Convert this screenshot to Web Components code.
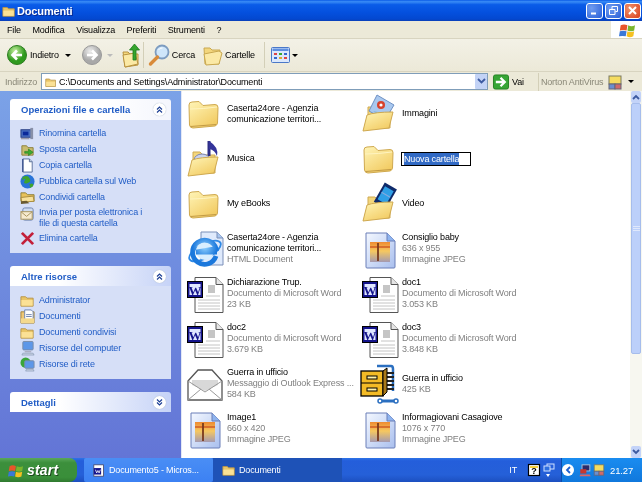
<!DOCTYPE html>
<html lang="it"><head><meta charset="utf-8"><title>Documenti</title>
<style>
html,body{margin:0;padding:0;width:642px;height:482px;overflow:hidden;background:#ece9d8;font-family:"Liberation Sans",Arial,sans-serif;font-size:9px}
</style></head>
<body>
<xp-window>
  <xp-titlebar slot="title" label="Documenti"></xp-titlebar>
  <xp-menubar slot="menu"></xp-menubar>
  <xp-toolbar slot="tools"></xp-toolbar>
  <xp-address slot="address" path="C:\Documents and Settings\Administrator\Documenti"></xp-address>
  <xp-sidebar slot="side">
    <xp-panel label="Operazioni file e cartella" first>
      <xp-task icon="rename">Rinomina cartella</xp-task>
      <xp-task icon="move">Sposta cartella</xp-task>
      <xp-task icon="copy">Copia cartella</xp-task>
      <xp-task icon="globe">Pubblica cartella sul Web</xp-task>
      <xp-task icon="share">Condividi cartella</xp-task>
      <xp-task icon="mail" multi>Invia per posta elettronica i<br>file di questa cartella</xp-task>
      <xp-task icon="del">Elimina cartella</xp-task>
    </xp-panel>
    <xp-panel label="Altre risorse">
      <xp-task icon="folder">Administrator</xp-task>
      <xp-task icon="mydocs">Documenti</xp-task>
      <xp-task icon="folder">Documenti condivisi</xp-task>
      <xp-task icon="pc">Risorse del computer</xp-task>
      <xp-task icon="net">Risorse di rete</xp-task>
    </xp-panel>
    <xp-panel label="Dettagli" collapsed></xp-panel>
  </xp-sidebar>
  <xp-files slot="main">
    <xp-file icon="folder" name="Caserta24ore - Agenzia" name2="comunicazione territori..."></xp-file>
    <xp-file icon="fpics" name="Immagini"></xp-file>
    <xp-file icon="fmusic" name="Musica"></xp-file>
    <xp-file icon="folder" name="Nuova cartella" editing></xp-file>
    <xp-file icon="folder" name="My eBooks"></xp-file>
    <xp-file icon="fvideo" name="Video"></xp-file>
    <xp-file icon="ie" name="Caserta24ore - Agenzia" name2="comunicazione territori..." d1="HTML Document"></xp-file>
    <xp-file icon="jpg" name="Consiglio baby" d1="636 x 955" d2="Immagine JPEG"></xp-file>
    <xp-file icon="word" name="Dichiarazione Trup." d1="Documento di Microsoft Word" d2="23 KB"></xp-file>
    <xp-file icon="word" name="doc1" d1="Documento di Microsoft Word" d2="3.053 KB"></xp-file>
    <xp-file icon="word" name="doc2" d1="Documento di Microsoft Word" d2="3.679 KB"></xp-file>
    <xp-file icon="word" name="doc3" d1="Documento di Microsoft Word" d2="3.848 KB"></xp-file>
    <xp-file icon="eml" name="Guerra in ufficio" d1="Messaggio di Outlook Express ..." d2="584 KB"></xp-file>
    <xp-file icon="zip" name="Guerra in ufficio" d1="425 KB"></xp-file>
    <xp-file icon="jpg" name="Image1" d1="660 x 420" d2="Immagine JPEG"></xp-file>
    <xp-file icon="jpg" name="Informagiovani Casagiove" d1="1076 x 770" d2="Immagine JPEG"></xp-file>
    <xp-file icon="blank"></xp-file>
    <xp-file icon="blank"></xp-file>
  </xp-files>
  <xp-scrollbar slot="scroll"></xp-scrollbar>
  <xp-taskbar slot="taskbar"></xp-taskbar>
</xp-window>
<script>
const FONT='"Liberation Sans",Arial,sans-serif';
const FOLDER=`<defs><linearGradient id="f" x1="0" y1="0" x2=".7" y2="1"><stop offset="0" stop-color="#fff5b8"/><stop offset="1" stop-color="#f2cb62"/></linearGradient></defs>`;
const ICONS={
folder:FOLDER+`<path d="M2 7Q2 4 5 4L12 3.500L16 7.500L28 6.500Q31 6.500 31 9.500L30.500 25Q30 27.500 28 28L6 30Q3 30 2.500 27Z" fill="url(#f)" stroke="#cfa950" stroke-width="1"/><path d="M3 11Q16 11 30 9" fill="none" stroke="#fff4c0" stroke-width="1"/><path d="M3.500 28.500L29 26.500" stroke="#c29a45" stroke-width="1.200"/>`,
openback:`<path d="M6 9h7l3 3h12v18H6z" fill="#f3d67c" stroke="#cfa950"/>`,
blank:`<path d="M6 .5h18l5 5V32H6z" fill="#fff" stroke="#8a8a8a"/><path d="M24 .5v5h5" fill="#ddd" stroke="#8a8a8a"/>`,
word:`<path d="M8 -.5h21l7 7V34.500H8z" fill="#fff" stroke="#555"/><path d="M29 -.5v7h7" fill="#e6e6e6" stroke="#555"/><path d="M21 7h7v8h-7z" fill="#c5c5c5"/><path d="M19 18h14M11 22h22M11 25h22M11 28h22M11 31h22" stroke="#c4c4c4"/><rect x="0.500" y="3.500" width="15" height="16" fill="#14148c" stroke="#000"/><rect x="2.500" y="6" width="11" height="11" fill="#dfe6ff"/><text x="8" y="16.500" font-family="Liberation Serif,serif" font-weight="bold" font-size="13" text-anchor="middle" fill="#14148c">W</text>`,
jpg:`<defs><linearGradient id="p" x1="0" y1="0" x2="1" y2="1"><stop offset="0" stop-color="#f4f8ff"/><stop offset="1" stop-color="#a9bfee"/></linearGradient><linearGradient id="s" x1="0" y1="0" x2="0" y2="1"><stop offset="0" stop-color="#ee8a30"/><stop offset=".45" stop-color="#f6c860"/><stop offset="1" stop-color="#a59ab0"/></linearGradient></defs><path d="M4 0h21l8 8v26q0 1-1 1H5q-1 0-1-1z" fill="url(#p)" stroke="#6a7fb8"/><path d="M25 0v8h8" fill="#8fb4ee" stroke="#6a7fb8"/><rect x="8" y="9" width="20" height="20" fill="url(#s)"/><path d="M8 14h20" stroke="#c8481c" stroke-width="1.200"/><path d="M16 10v18" stroke="#7a3a1c" stroke-width="1.800"/>`,
ie:`<defs><radialGradient id="e" cx=".5" cy=".3"><stop offset="0" stop-color="#8fd0ff"/><stop offset="1" stop-color="#1b78dc"/></radialGradient></defs><path d="M14 -1h16l6 6v27H14z" fill="#dfeafc" stroke="#7b8fb8"/><path d="M30 -1v6h6" fill="#a9c6ee" stroke="#7b8fb8"/><ellipse cx="18" cy="18" rx="17.500" ry="7" transform="rotate(-28 18 18)" fill="none" stroke="#2f8ae6" stroke-width="1.800"/><circle cx="18" cy="18" r="9" fill="#d8eeff"/><path d="M29 23A12 12 0 1 1 29 15.500L9 19H30" fill="none" stroke="url(#e)" stroke-width="4.800"/>`,
eml:`<path d="M1 13L11 2H25L35 13V32H1Z" fill="#fff" stroke="#555" stroke-width="1.300"/><path d="M5 12H31V17L18 23L5 17Z" fill="#d8d8d8"/><path d="M1 13L18 24L35 13M1 32L14 21M35 32L22 21" fill="none" stroke="#999"/>`,
zip:`<g transform="translate(-2,-3)"><path d="M17 1H31Q33 1 33 4V26" fill="none" stroke="#2b6fc0" stroke-width="2.500"/><path d="M25 8h9M25 12h9M25 16h9M25 20h9M25 24h9" stroke="#222" stroke-width="1.800"/><rect x="1" y="6" width="22" height="25" fill="#f3bb26" stroke="#000" stroke-width="1.300"/><path d="M23 6L27 3V27L23 31Z" fill="#a8791a" stroke="#000"/><path d="M1 18H23" stroke="#000"/><rect x="7" y="11" width="10" height="3" fill="#fff3a8" stroke="#000"/><rect x="7" y="23" width="10" height="3" fill="#fff3a8" stroke="#000"/><circle cx="20" cy="36" r="2" fill="none" stroke="#2b6fc0" stroke-width="1.500"/><circle cx="36" cy="36" r="2" fill="none" stroke="#2b6fc0" stroke-width="1.500"/><path d="M22 36H34" stroke="#2b6fc0" stroke-width="3"/></g>`,
back:`<defs><radialGradient id="g" cx=".4" cy=".3"><stop offset="0" stop-color="#c8f0a0"/><stop offset="1" stop-color="#2f9a1e"/></radialGradient></defs><circle cx="10" cy="10" r="9.500" fill="url(#g)" stroke="#2d7d20"/><path d="M15 10H6M10 5.500L5.500 10L10 14.500" fill="none" stroke="#fff" stroke-width="2.600"/>`,
fwd:`<defs><radialGradient id="g" cx=".4" cy=".3"><stop offset="0" stop-color="#eee"/><stop offset="1" stop-color="#a8a8a8"/></radialGradient></defs><circle cx="10" cy="10" r="9.500" fill="url(#g)" stroke="#999"/><path d="M5 10H14M10 5.500L14.500 10L10 14.500" fill="none" stroke="#fff" stroke-width="2.600"/>`,
up:`<path d="M2 9h5l2 2h8v11L4 24Z" fill="#f7da7e" stroke="#b8923e"/><path d="M2 12L14 10L17 21L4 24Z" fill="#fbe9a5" stroke="#b8923e"/><path d="M12 17V7H8.500L13.500 1L18.500 7H15V17Z" fill="#35a52c" stroke="#1d7a1c" stroke-width=".8"/>`,
search:`<circle cx="13" cy="8" r="6.500" fill="#cfe6fa" stroke="#7d9cc0" stroke-width="1.800"/><path d="M9.500 6a4 4 0 0 1 4-2" stroke="#fff" fill="none"/><path d="M8.500 13L1.500 20" stroke="#d98b3a" stroke-width="3.400" stroke-linecap="round"/>`,
tfolder:`<path d="M1 3h6l2 2h8l-1 14H2Z" fill="#f3d67c" stroke="#c9a850"/><path d="M1 9L16 6L19 8L16 19L3 20Z" fill="#fbe9a5" stroke="#c9a850"/>`,
views:`<rect x=".5" y=".5" width="18" height="15" rx="1" fill="#dbe8fc" stroke="#4a78c8"/><rect x="1.500" y="1.500" width="16" height="2.500" fill="#5f8fe0"/><path d="M3 6h3v2H3z" fill="#d44"/><path d="M8 6h3v2H8z" fill="#3a3"/><path d="M13 6h3v2h-3z" fill="#36c"/><path d="M3 10h3v2H3z" fill="#36c"/><path d="M8 10h3v2H8z" fill="#da3"/><path d="M13 10h3v2h-3z" fill="#d44"/>`,
flag:`<path d="M2 4Q6 2 10 4L9 10Q5 9 1 10Z" fill="#e8552a"/><path d="M11 4Q15 6 19 4L18 10Q14 12 10 10Z" fill="#7ab52c"/><path d="M1 11Q5 10 9 11L8 17Q4 16 0 17Z" fill="#3a78d8"/><path d="M10 11Q14 13 18 11L17 17Q13 19 9 17Z" fill="#f5c020"/>`,
go:`<rect x=".5" y=".5" width="16" height="15" rx="2" fill="#37a535" stroke="#20801f"/><path d="M3 8H12M8 3.500L12.500 8L8 12.500" fill="none" stroke="#fff" stroke-width="2.400"/>`,
norton:`<rect x="1" y="1" width="12" height="8" fill="#f5dc60" stroke="#7a7a60"/><rect x="1" y="9" width="6" height="5" fill="#6a8fd0" stroke="#667"/><rect x="7" y="9" width="6" height="5" fill="#d06a6a" stroke="#667"/>`,
rename:`<rect x="1" y="4" width="11" height="8" fill="#4a6fc0" stroke="#223a80"/><rect x="3" y="6" width="6" height="4" fill="#0b2a9a"/><path d="M12.500 2v12" stroke="#8890a8" stroke-width="3"/><path d="M1 13.500h9" stroke="#99a" stroke-width="1.400"/>`,
move:`<path d="M2 4h5l1.500 2H14v8H2Z" fill="#c9bc70" stroke="#8d7f3a"/><path d="M5 10h4V7.500L14 11l-5 3.500V12H5Z" fill="#3dab2e" stroke="#1e7a1c" stroke-width=".6"/>`,
copy:`<path d="M3 1h7l3 3v11H3Z" fill="#fff" stroke="#5a6f9a"/><path d="M10 1v3h3" fill="#bcd" stroke="#5a6f9a"/><path d="M3 1v14" stroke="#3d5590" stroke-width="1.500"/>`,
globe:`<circle cx="8" cy="8" r="7.500" fill="#2a74d8"/><path d="M3 3Q7 1 9 3T11 7T7 10T5 7T2 7ZM10 11Q13 9 14 11T11 15Z" fill="#3fa52e"/>`,
share:`<path d="M1 3h5l2 2h7v7H1Z" fill="#e8c25a" stroke="#8d7f3a"/><path d="M1 8L14 6.500L15 12L2 13Z" fill="#f8e199" stroke="#a88a3a"/><path d="M1 12L7 11.500L10 14L1 15Z" fill="#6a5a30"/>`,
mail:`<rect x="3" y="1" width="11" height="13" rx="2" fill="#cfdcf2" stroke="#6c82ae"/><rect x="1" y="5" width="12" height="8" fill="#f6ead0" stroke="#a8925a"/><path d="M1 5L7 10L13 5" fill="none" stroke="#a8925a"/>`,
del:`<path d="M2 2L14 14M14 2L2 14" stroke="#c3203a" stroke-width="3"/>`,
tfold:`<path d="M1 4h5l1.500 1.500H14V14H1Z" fill="#e9c566" stroke="#b89448"/><path d="M1.500 7.500H13.500V13.500H1.500Z" fill="#fbe195"/>`,
mydocs:`<path d="M1 3h14v12H1Z" fill="#eec877" stroke="#a58438"/><path d="M5 1h7l2 2v9H5Z" fill="#fff" stroke="#6c82ae"/><path d="M6.500 6h6M6.500 8h6" stroke="#6c82ae"/><path d="M1 10H15V15H1Z" fill="#f4d98d"/>`,
pc:`<rect x="3" y="0.500" width="11" height="9" rx="1" fill="#5d97e8" stroke="#7a8ca8"/><path d="M5 11h7v1H5z" fill="#99a"/><path d="M3 13h11l1 2H2Z" fill="#c9d3e5" stroke="#7a8ca8" stroke-width=".6"/>`,
net:`<circle cx="6" cy="6" r="5.500" fill="#3aa63a"/><rect x="5" y="4" width="10" height="8" rx="1" fill="#5d97e8" stroke="#7a8ca8"/><path d="M7 13h7l1 2H6Z" fill="#c9d3e5" stroke="#7a8ca8" stroke-width=".6"/>`,
docw:`<rect x="1" y="1" width="12" height="14" fill="#fff" stroke="#446"/><rect x="1" y="5" width="9" height="8" fill="#14148c"/><path d="M3 7l1.500 4L6 8l1.500 3L9 7" fill="none" stroke="#fff"/>`,
help:`<rect x=".5" y=".5" width="11" height="11" fill="#fff" stroke="#000" stroke-width="1.200"/><path d="M2 2h8v2H2z" fill="#f5d040"/><text x="6" y="10" font-family="Liberation Sans,sans-serif" font-weight="bold" font-size="9" text-anchor="middle" fill="#000">?</text>`,
tnet:`<rect x="4" y="1" width="7" height="5" fill="none" stroke="#cfe0ff"/><rect x="1" y="3" width="6" height="5" fill="#2e6fe0" stroke="#cfe0ff"/><path d="M3 11h4l-2 3z" fill="#fff"/>`,
tnet2:`<rect x="3" y="1" width="9" height="7" fill="#2b2b6a" stroke="#bcd"/><rect x="1" y="6" width="7" height="5" fill="#c8372f"/><path d="M1 12H12L13 14H0Z" fill="#d66"/>`
};
const openFolder=(extra)=>FOLDER+ICONS.openback+extra+`<path d="M1 33L5 17Q13 14 31 14L27 30Z" fill="url(#f)" stroke="#cfa950"/>`;
ICONS.fpics=openFolder(`<path d="M15 -3L32 7L23 22L7 13Z" fill="#a9c8ef" stroke="#6f91c4"/><circle cx="19" cy="7" r="4" fill="#d7422c"/><circle cx="19" cy="7" r="1.600" fill="#fff"/><path d="M11 13L26 16L23 22Z" fill="#7fb4e0"/>`);
ICONS.fmusic=openFolder(`<path d="M22 -2V13" stroke="#2e2e86" stroke-width="3"/><path d="M22 -2Q32 4 30 13Q28 7 22 6Z" fill="#34349a"/><ellipse cx="15" cy="17" rx="8" ry="6" fill="#c9d2ec" stroke="#7c85b3"/>`);
ICONS.fvideo=openFolder(`<g transform="rotate(30 22 8)"><rect x="16" y="-4" width="14" height="22" fill="#0f2a6a"/><rect x="18" y="-1" width="10" height="15" fill="#2f9fe6"/><path d="M18 6h10" stroke="#8ad" /></g>`);

const tpl=(css,html)=>{const t=document.createElement('template');t.innerHTML=`<style>${css}</style>${html}`;return t};
const mk=(name,css,html,setup)=>{const t=tpl(css,html);customElements.define(name,class extends HTMLElement{constructor(){super();this.attachShadow({mode:'open'}).appendChild(t.content.cloneNode(true))}connectedCallback(){setup&&setup.call(this,this.shadowRoot)}})};

customElements.define('xp-icon',class extends HTMLElement{static get observedAttributes(){return['name']}
constructor(){super();this.attachShadow({mode:'open'})}
render(){const n=this.getAttribute('name'),w=+this.getAttribute('w')||16,h=+this.getAttribute('h')||w,vb=this.getAttribute('vb')||`0 0 ${w} ${h}`;
this.shadowRoot.innerHTML=`<style>:host{display:block;flex:none;width:${w}px;height:${h}px}svg{display:block;overflow:visible}</style><svg width="${w}" height="${h}" viewBox="${vb}">${ICONS[n]||''}</svg>`}
connectedCallback(){this.render()}attributeChangedCallback(){this.render()}});

mk('xp-window',`:host{display:grid;width:642px;height:482px;grid-template:21px 18px 33px 19px 367px 24px/181px 449px 12px;overflow:hidden;filter:blur(.25px);letter-spacing:-.15px}
::slotted([slot=title]),::slotted([slot=menu]),::slotted([slot=tools]),::slotted([slot=address]),::slotted([slot=taskbar]){grid-column:1/-1}`,
`<slot name="title"></slot><slot name="menu"></slot><slot name="tools"></slot><slot name="address"></slot><slot name="side"></slot><slot name="main"></slot><slot name="scroll"></slot><slot name="taskbar"></slot>`);

mk('xp-titlebar',`:host{display:flex;align-items:center;background:linear-gradient(#0a5ae6 0,#3a8cf6 8%,#0a5ce8 22%,#0450de 60%,#0348d0 90%,#0a3fb8 100%);color:#fff;font:bold 11px ${FONT};letter-spacing:-.15px;padding:0 1px 0 2px;gap:1px;text-shadow:1px 1px #0a2a90}
.t{flex:1}.b{width:17px;height:16px;border:1px solid #fff;border-radius:3px;box-sizing:border-box;background:radial-gradient(circle at 30% 30%,#6f9cf0,#2a5fd8);margin-left:1px;display:flex;align-items:center;justify-content:center}.c{background:radial-gradient(circle at 30% 30%,#f0906a,#d8401c)}svg{display:block}`,
`<xp-icon name="tfold" w="14" vb="0 0 16 16"></xp-icon><span class="t"></span><span class="b"><svg width="11" height="11"><path d="M2 8.500h5" stroke="#fff" stroke-width="2"/></svg></span><span class="b"><svg width="11" height="11"><path d="M1.500 4.500h5.500v5H1.500zM4 4V1.500h5.500v5H7.500" fill="none" stroke="#fff"/></svg></span><span class="b c"><svg width="11" height="11"><path d="M2 2l7 7M9 2l-7 7" stroke="#fff" stroke-width="2"/></svg></span>`,
function(s){s.querySelector('.t').textContent=this.getAttribute('label')});

mk('xp-menubar',`:host{display:flex;align-items:center;background:#ece9d8;border-bottom:1px solid #d8d4c0;box-sizing:border-box;font:9px ${FONT};color:#000;padding-left:7px}
ul{display:flex;flex:1;margin:0;padding:0;list-style:none}li{margin-right:11.500px}.logo{width:31px;height:17px;background:#fff;display:flex;align-items:center;justify-content:center}`,
`<ul><li>File</li><li>Modifica</li><li>Visualizza</li><li>Preferiti</li><li>Strumenti</li><li>?</li></ul><div class="logo"><xp-icon name="flag" w="16" h="16" vb="0 0 19 19"></xp-icon></div>`);

mk('xp-toolbar',`:host{display:flex;align-items:center;background:linear-gradient(#f3f1e6,#ece9d8);border-bottom:1px solid #d8d4c0;box-sizing:border-box;font:9px ${FONT};color:#000;padding-left:7px}
.t{margin-left:3px}.a{width:0;height:0;border:3px solid transparent;border-top:3px solid #000;border-bottom:0}.d{border-top-color:#bbb}.s{width:1px;height:26px;background:#d3cfb8}`,
`<xp-icon name="back" w="20"></xp-icon><span class="t">Indietro</span><span class="a" style="margin-left:6px"></span>
<xp-icon name="fwd" w="20" style="margin-left:11px"></xp-icon><span class="a d" style="margin-left:5px"></span>
<xp-icon name="up" w="20" h="24" style="margin-left:8px"></xp-icon><span class="s" style="margin-left:2px"></span>
<xp-icon name="search" w="20" h="22" style="margin-left:5px"></xp-icon><span class="t" style="margin-left:3px">Cerca</span>
<xp-icon name="tfolder" w="20" style="margin-left:8px"></xp-icon><span class="t" style="margin-left:2px">Cartelle</span><span class="s" style="margin-left:9px"></span>
<xp-icon name="views" w="19" h="16" style="margin-left:6px"></xp-icon><span class="a" style="margin-left:2px"></span>`);

mk('xp-address',`:host{display:flex;align-items:center;background:#ece9d8;box-sizing:border-box;font:9px ${FONT};padding-left:5px;white-space:nowrap}
.l{color:#8a8878;width:36px;flex:none}.box{width:447px;flex:none;height:17px;box-sizing:border-box;border:1px solid #7f9db9;background:#fff;display:flex;align-items:center;padding-left:3px;gap:2px;color:#000}.p{flex:1}
.dd{width:12px;height:15px;background:#c3d3f6;display:flex;align-items:center;justify-content:center;border-radius:1px}
.v{margin-left:3px}.s{width:1px;height:18px;background:#d3cfb8;margin:0 2px 0 14px}.n{color:#8a8878}`,
`<span class="l">Indirizzo</span><div class="box"><xp-icon name="tfold" w="12" vb="0 0 16 16"></xp-icon><span class="p"></span><span class="dd"><svg width="9" height="7"><path d="M1 1l3.500 3.500L8 1" fill="none" stroke="#3c5aa0" stroke-width="1.800"/></svg></span></div>
<xp-icon name="go" w="16" vb="0 0 17 16" style="margin-left:5px"></xp-icon><span class="v">Vai</span><span class="s"></span><span class="n">Norton AntiVirus</span><xp-icon name="norton" w="14" style="margin-left:5px"></xp-icon><span style="width:0;height:0;border:3px solid transparent;border-top-color:#000;border-bottom:0;margin-left:6px"></span>`,
function(s){s.querySelector('.p').textContent=this.getAttribute('path')});

mk('xp-sidebar',`:host{display:flex;flex-direction:column;gap:13px;padding:8px 10px;box-sizing:border-box;background:linear-gradient(#7ba2e7,#6375d6);overflow:hidden}`,`<slot></slot>`);

mk('xp-panel',`:host{display:block;font:9px ${FONT}}
.h{height:20px;display:flex;align-items:center;justify-content:space-between;padding:0 5px 0 11px;border-radius:3px 3px 0 0;background:linear-gradient(90deg,#fff 30%,#c6d3f7);color:#215dc6;font-weight:bold;font-size:9.500px;letter-spacing:0}
:host([first]) .h{height:21px;background:linear-gradient(90deg,#fff 60%,#f4f6fd)}
.c{width:13px;height:13px;border-radius:50%;background:#fff;box-shadow:0 0 1px #9ab;display:flex;align-items:center;justify-content:center}
.b{background:#d6dff7;padding:6px 0 7px}:host([collapsed]) .b{display:none}:host([first]) .b{padding-top:5px}`,
`<div class="h"><span class="l"></span><span class="c"><svg width="9" height="9"><path class="p" d="M2 4.500L4.500 2L7 4.500M2 7.500L4.500 5L7 7.500" fill="none" stroke="#1c3f94" stroke-width="1.200"/></svg></span></div><div class="b"><slot></slot></div>`,
function(s){s.querySelector('.l').textContent=this.getAttribute('label');if(this.hasAttribute('collapsed'))s.querySelector('.p').setAttribute('d','M2 1.500L4.500 4L7 1.500M2 4.500L4.500 7L7 4.500')});

mk('xp-task',`:host{display:flex;align-items:center;gap:4px;min-height:16px;padding-left:10px;color:#215dc6;font:9px/11px ${FONT};box-sizing:border-box}
:host([multi]){align-items:flex-start;padding-top:2px;padding-bottom:1px}div{flex:1}`,
`<xp-icon w="15" vb="0 0 16 16"></xp-icon><div><slot></slot></div>`,
function(s){s.querySelector('xp-icon').setAttribute('name',{folder:'tfold'}[this.getAttribute('icon')]||this.getAttribute('icon'))});

mk('xp-files',`:host{display:grid;grid-template-columns:175px 175px;grid-auto-rows:45px;padding:0 0 0 5px;background:#fff;overflow:hidden;border-left:1px solid #e3e8f6;align-content:start;font:9px/11px ${FONT}}`,`<slot></slot>`);

customElements.define('xp-file',class extends HTMLElement{constructor(){super();this.attachShadow({mode:'open'})}
connectedCallback(){const a=k=>this.getAttribute(k),ed=this.hasAttribute('editing'),ic=a('icon');
const lines=[a('name'),a('name2')].filter(Boolean).map(x=>ed?`<div class="ed"><span>${x}</span></div>`:`<div>${x}</div>`).join('');
const det=[a('d1'),a('d2')].filter(Boolean).map(x=>`<div class="g">${x}</div>`).join('');
this.shadowRoot.innerHTML=`<style>:host{display:flex;align-items:center;gap:5px;white-space:nowrap;color:#000;overflow:visible}
.g{color:#808080}.ed{border:1px solid #000;width:70px;height:14px;box-sizing:border-box;margin-left:-1px;line-height:12px;padding-left:2px}.ed span{background:#316ac5;color:#fff;display:inline-block}</style>
<xp-icon name="${ic}" w="35" h="32" vb="0 0 35 32"></xp-icon><div>${lines}${det}</div>`}});

mk('xp-scrollbar',`:host{display:flex;flex-direction:column;background:#f7f7f0;box-sizing:border-box;padding:0 1px}
.b{height:12px;background:#c3d3f8;border-radius:2px;display:flex;align-items:center;justify-content:center}.th{height:251px;background:#bcd0fa;border:1px solid #a6bdec;box-sizing:border-box;border-radius:2px;display:flex;align-items:center;justify-content:center}.sp{flex:1}`,
`<div class="b"><svg width="8" height="6"><path d="M1 5l3-3 3 3" fill="none" stroke="#3c5aa0" stroke-width="1.800"/></svg></div><div class="th"><svg width="7" height="7"><path d="M0 1.500h7M0 3.500h7M0 5.500h7" stroke="#dfe8fc"/></svg></div><div class="sp"></div><div class="b"><svg width="8" height="6"><path d="M1 1l3 3 3-3" fill="none" stroke="#3c5aa0" stroke-width="1.800"/></svg></div>`);

mk('xp-taskbar',`:host{display:flex;align-items:stretch;background:linear-gradient(#2d73e8 0,#245edb 12%,#2560d8 70%,#1c4fc0 100%);font:9px ${FONT};color:#fff}
.st{width:77px;flex:none;box-sizing:border-box;background:linear-gradient(#5aa85a,#3c8f3c 20%,#3a8f3a 80%,#2f7a2f);border-radius:0 8px 8px 0;display:flex;align-items:center;gap:4px;padding-left:8px;font:italic bold 14px ${FONT};letter-spacing:.2px;text-shadow:1px 1px #1c4a1c}
.tk{width:129px;flex:none;box-sizing:border-box;display:flex;align-items:center;gap:3px;padding-left:9px;overflow:hidden;white-space:nowrap}.on{margin-left:7px;background:linear-gradient(#4a8ef5,#3c81f3);border-radius:2px}.pr{background:#1e52b7}
.sp{flex:1}.l{display:flex;align-items:center;margin-right:4px}.tray{display:flex;align-items:center;width:81px;flex:none;box-sizing:border-box;background:linear-gradient(#1a8cf0,#1078dc);border-left:1px solid #0c4fa8}.ch{width:12px;height:12px;border-radius:50%;background:#fff;display:flex;align-items:center;justify-content:center}.tm{margin-left:5px;font-size:9.500px}`,
`<div class="st"><xp-icon name="flag" w="15" vb="0 0 19 19"></xp-icon><span>start</span></div>
<div class="tk on"><xp-icon name="docw" w="13" vb="0 0 16 16"></xp-icon><span>Documento5 - Micros...</span></div>
<div class="tk pr"><xp-icon name="tfold" w="14" vb="0 0 16 16"></xp-icon><span>Documenti</span></div>
<div class="sp"></div>
<div class="l"><span>IT</span><xp-icon name="help" w="12" style="margin-left:11px"></xp-icon><xp-icon name="tnet" w="14" style="margin-left:3px"></xp-icon></div>
<div class="tray"><span class="ch"><svg width="7" height="8"><path d="M5 1L2 4l3 3" fill="none" stroke="#1b5fd0" stroke-width="1.800"/></svg></span><xp-icon name="tnet2" w="13" vb="0 0 14 15" style="margin-left:5px"></xp-icon><xp-icon name="norton" w="12" vb="0 0 14 15" style="margin-left:1px"></xp-icon><span class="tm">21.27</span></div>`);
</script>
</body></html>
